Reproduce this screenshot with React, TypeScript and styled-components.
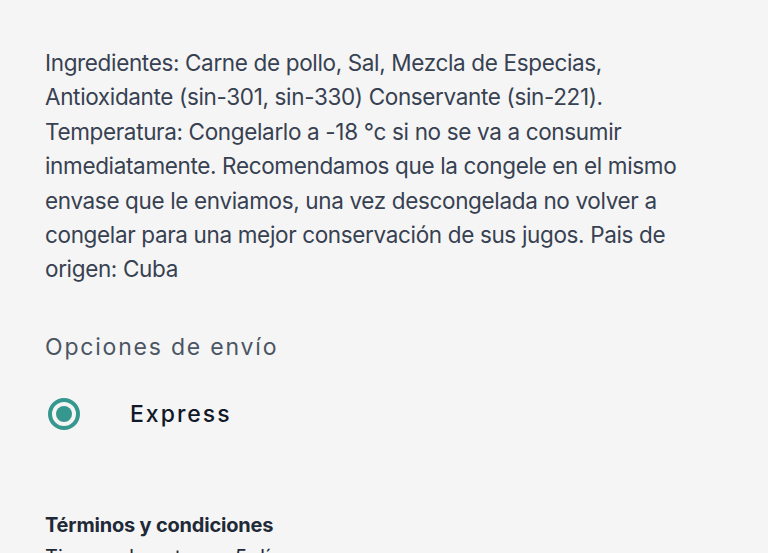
import React from "react";
import styled, { createGlobalStyle } from "styled-components";

const Global = createGlobalStyle`
  html, body { margin: 0; padding: 0; background: #f5f5f5; }
  body { font-family: Inter, "Noto Sans", sans-serif; -webkit-font-smoothing: antialiased; }
`;

const Page = styled.div`
  width: 768px;
  height: 553px;
  overflow: hidden;
  background: #f5f5f5;
  padding: 46px 45px 0 45px;
  box-sizing: border-box;
  display: flex;
  flex-direction: column;
`;

const Description = styled.p`
  margin: 0;
  font-size: 22.5px;
  line-height: 34.4px;
  color: #374151;
  max-width: 665px;
  letter-spacing: -0.35px;
`;

const SectionTitle = styled.h2`
  margin: 43px 0 0 0;
  font-size: 23px;
  font-weight: 400;
  letter-spacing: 1.8px;
  line-height: 34px;
  color: #4b5563;
`;

const OptionRow = styled.label`
  display: flex;
  align-items: center;
  gap: 50px;
  margin-top: 34px;
  height: 34px;
`;

const Radio = styled.span`
  width: 32px;
  height: 32px;
  margin-left: 3px;
  box-sizing: border-box;
  border-radius: 50%;
  border: 4px solid #36978f;
  display: flex;
  align-items: center;
  justify-content: center;
  &::after {
    content: "";
    width: 16px;
    height: 16px;
    border-radius: 50%;
    background: #36978f;
  }
`;

const OptionLabel = styled.span`
  font-size: 23px;
  letter-spacing: 2px;
  color: #111827;
  font-weight: 500;
`;

const TermsTitle = styled.h3`
  margin: 81px 0 0 0;
  font-size: 20px;
  font-weight: 700;
  line-height: 28px;
  color: #1f2937;
  letter-spacing: -0.2px;
`;

const TermsText = styled.p`
  margin: 4px 0 0 0;
  font-size: 20px;
  line-height: 28px;
  color: #1f2937;
`;

export default function App() {
  return (
    <>
      <Global />
      <Page>
        <Description>
          Ingredientes: Carne de pollo, Sal, Mezcla de Especias, Antioxidante
          (sin-301, sin-330) Conservante (sin-221). Temperatura: Congelarlo a
          -18 °c si no se va a consumir inmediatamente. Recomendamos que la
          congele en el mismo envase que le enviamos, una vez descongelada no
          volver a congelar para una mejor conservación de sus jugos. Pais de
          origen: Cuba
        </Description>
        <SectionTitle>Opciones de envío</SectionTitle>
        <OptionRow>
          <Radio />
          <OptionLabel>Express</OptionLabel>
        </OptionRow>
        <TermsTitle>Términos y condiciones</TermsTitle>
        <TermsText>Tiempo de entrega: 5 días</TermsText>
      </Page>
    </>
  );
}
